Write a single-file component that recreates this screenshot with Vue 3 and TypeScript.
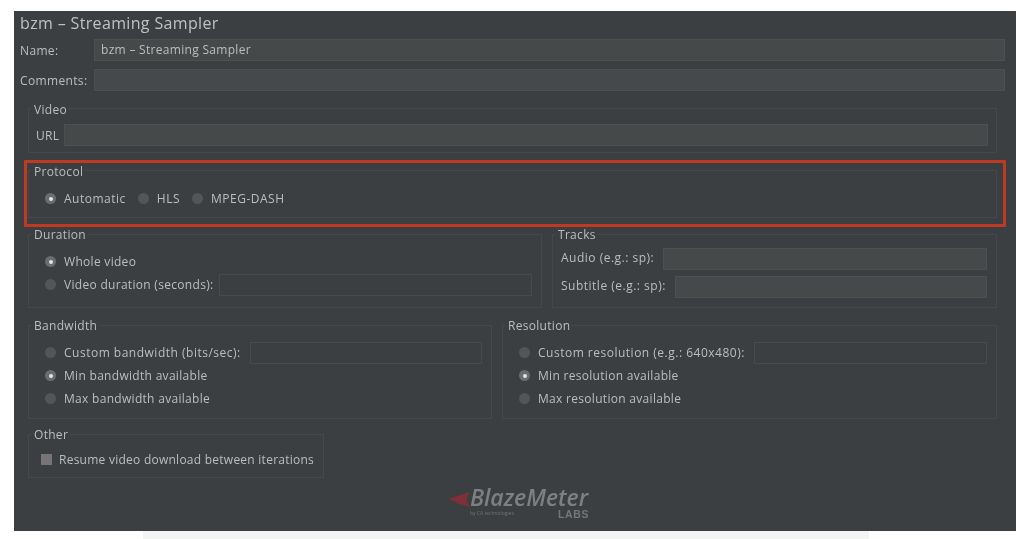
<script setup lang="ts">
interface Opt { label: string; on?: boolean; input?: boolean; wide?: boolean }
const protocol: Opt[] = [{ label: 'Automatic', on: true }, { label: 'HLS' }, { label: 'MPEG-DASH' }]
const duration: Opt[] = [{ label: 'Whole video', on: true }, { label: 'Video duration (seconds):', input: true }]
const bandwidth: Opt[] = [
  { label: 'Custom bandwidth (bits/sec):', input: true, wide: true },
  { label: 'Min bandwidth available', on: true },
  { label: 'Max bandwidth available' },
]
const resolution: Opt[] = [
  { label: 'Custom resolution (e.g.: 640x480):', input: true, wide: true },
  { label: 'Min resolution available', on: true },
  { label: 'Max resolution available' },
]
</script>

<template>
  <div class="page">
    <main class="panel">
      <h1 class="title">bzm – Streaming Sampler</h1>

      <div class="form-row name">
        <label class="lbl">Name:</label>
        <div class="input val">bzm – Streaming Sampler</div>
      </div>
      <div class="form-row comments">
        <label class="lbl">Comments:</label>
        <div class="input"></div>
      </div>

      <fieldset class="group video">
        <legend>Video</legend>
        <div class="url">
          <span class="txt">URL</span>
          <div class="input"></div>
        </div>
      </fieldset>

      <fieldset class="group protocol">
        <legend>Protocol</legend>
        <div class="inline">
          <div v-for="o in protocol" :key="o.label" class="opt">
            <span class="radio" :class="{ on: o.on }"></span>
            <span class="txt wide">{{ o.label }}</span>
          </div>
        </div>
        <div class="highlight"></div>
      </fieldset>

      <div class="split dur-tracks">
        <fieldset class="group">
          <legend>Duration</legend>
          <div class="stack">
            <div v-for="o in duration" :key="o.label" class="opt">
              <span class="radio" :class="{ on: o.on }"></span>
              <span class="txt">{{ o.label }}</span>
              <div v-if="o.input" class="input line"></div>
            </div>
          </div>
        </fieldset>
        <fieldset class="group">
          <legend>Tracks</legend>
          <div class="tracks">
            <div class="track">
              <span class="txt wide">Audio (e.g.: sp):</span>
              <div class="input"></div>
            </div>
            <div class="track">
              <span class="txt wide">Subtitle (e.g.: sp):</span>
              <div class="input"></div>
            </div>
          </div>
        </fieldset>
      </div>

      <div class="split band-res">
        <fieldset class="group">
          <legend>Bandwidth</legend>
          <div class="stack">
            <div v-for="o in bandwidth" :key="o.label" class="opt">
              <span class="radio" :class="{ on: o.on }"></span>
              <span class="txt" :class="{ wide: o.wide }">{{ o.label }}</span>
              <div v-if="o.input" class="input line far"></div>
            </div>
          </div>
        </fieldset>
        <fieldset class="group">
          <legend>Resolution</legend>
          <div class="stack">
            <div v-for="o in resolution" :key="o.label" class="opt">
              <span class="radio" :class="{ on: o.on }"></span>
              <span class="txt" :class="{ wide: o.wide }">{{ o.label }}</span>
              <div v-if="o.input" class="input line far"></div>
            </div>
          </div>
        </fieldset>
      </div>

      <fieldset class="group other">
        <legend>Other</legend>
        <div class="check-row">
          <span class="check"></span>
          <span class="txt">Resume video download between iterations</span>
        </div>
      </fieldset>

      <div class="logo">
        <svg class="mark" width="23" height="18" viewBox="0 0 22 18">
          <path d="M0 8 L21 1 L18 9 L21 16 L11 13 Z" fill="#7f2f38" />
        </svg>
        <div class="logo-text">
          <div class="brand">BlazeMeter</div>
          <div class="sub">
            <span class="by">by CA technologies</span>
            <span class="labs">LABS</span>
          </div>
        </div>
      </div>
    </main>
    <div class="strip"></div>
  </div>
</template>

<style>
html, body { margin: 0; background: #fff; }
</style>

<style scoped>
.page {
  width: 1024px;
  height: 539px;
  overflow: hidden;
  padding-top: 11px;
  box-sizing: border-box;
  font-family: "Open Sans", "DejaVu Sans", sans-serif;
}
.panel {
  width: 1002px;
  height: 520px;
  margin-left: 14px;
  box-sizing: border-box;
  background: #3c3f41;
  color: #bcbebe;
  padding: 0 11px 0 14px;
  display: flex;
  flex-direction: column;
  filter: blur(0.6px);
}
.title {
  margin: 0 0 0 -8px;
  height: 28px;
  line-height: 24px;
  font-size: 16px;
  font-weight: 400;
  letter-spacing: 0.35px;
  color: #c0c2c2;
}
.form-row {
  display: flex;
  align-items: center;
  height: 22px;
  margin-left: -8px;
}
.form-row .input { flex: 1; height: 22px; }
.comments { margin-top: 8px; }
.lbl {
  width: 74px;
  flex: none;
  font-size: 12px;
  letter-spacing: 0.35px;
}
.input {
  box-sizing: border-box;
  background: #45494a;
  border: 1px solid #4c5052;
  min-width: 0;
}
.val {
  font-size: 12px;
  letter-spacing: 0.3px;
  line-height: 20px;
  padding-left: 6px;
}
.txt {
  font-size: 12px;
  letter-spacing: 0.3px;
  white-space: nowrap;
}
.txt.wide { letter-spacing: 0.5px; }
.group {
  margin: 0;
  padding: 0;
  min-width: 0;
  box-sizing: border-box;
  border: 1px solid #46494b;
}
.group legend {
  margin-left: 2px;
  padding: 0 2px 0 3px;
  font-size: 12px;
  letter-spacing: 0.3px;
  line-height: 18px;
  height: 14px;
}
.split .group legend,
.other legend { line-height: 16px; }
.video { margin: 10px 8px 0 0; height: 52px; }
.url {
  display: flex;
  align-items: center;
  gap: 5px;
  padding: 9px 8px 0 7px;
}
.url .input { flex: 1; height: 22px; }
.protocol {
  position: relative;
  margin: 10px 8px 0 0;
  height: 55px;
}
.highlight {
  position: absolute;
  left: -5px;
  right: -10px;
  top: -17px;
  bottom: -17px;
  border: 3px solid #bf3a22;
  border-radius: 1px;
  pointer-events: none;
}
.inline {
  display: flex;
  gap: 12px;
  padding: 10px 0 0 16px;
}
.opt {
  display: flex;
  align-items: center;
  height: 23px;
}
.radio {
  flex: none;
  width: 11px;
  height: 11px;
  border-radius: 50%;
  background: #535657;
  margin-right: 8px;
  position: relative;
}
.radio.on { background: #6a6c6d; }
.radio.on::after {
  content: "";
  position: absolute;
  left: 3.5px;
  top: 3.5px;
  width: 4px;
  height: 4px;
  border-radius: 50%;
  background: #e4e4e4;
}
.split {
  display: grid;
  column-gap: 10px;
  margin-right: 8px;
}
.dur-tracks {
  grid-template-columns: 514px 445px;
  margin-top: 9px;
  height: 81px;
}
.band-res {
  grid-template-columns: 464px 495px;
  margin-top: 10px;
  height: 101px;
}
.stack {
  display: flex;
  flex-direction: column;
  padding: 9px 9px 0 16px;
}
.opt .input.line {
  flex: 1;
  height: 22px;
  margin-left: 6px;
  background: transparent;
  border-color: #484b4d;
}
.opt .input.line.far { margin-left: 9px; }
.tracks {
  display: flex;
  flex-direction: column;
  gap: 6px;
  padding: 7px 9px 0 8px;
}
.track {
  display: flex;
  align-items: center;
  gap: 9px;
}
.track .txt { margin-bottom: 3px; }
.track .input { flex: 1; height: 22px; }
.other {
  width: 296px;
  margin-top: 8px;
  height: 51px;
}
.check-row {
  display: flex;
  align-items: center;
  gap: 7px;
  padding: 10px 0 0 12px;
}
.check-row .txt { letter-spacing: 0.25px; }
.check {
  width: 11px;
  height: 11px;
  background: #767475;
}
.logo {
  display: flex;
  align-items: flex-start;
  justify-content: center;
  margin-top: 8px;
  margin-left: 7px;
}
.mark { margin: 5px -1px 0 0; }
.logo-text { width: 122px; }
.brand {
  font-style: italic;
  font-weight: 600;
  font-size: 23px;
  line-height: 23px;
  height: 23px;
  letter-spacing: 0;
  color: #7d8082;
}
.sub {
  display: flex;
  justify-content: space-between;
  align-items: flex-start;
  padding-right: 3px;
}
.by {
  font-size: 5px;
  line-height: 8px;
  color: #707375;
  white-space: nowrap;
}
.labs {
  font-family: "Liberation Sans", sans-serif;
  font-weight: 700;
  font-size: 10.5px;
  line-height: 11px;
  letter-spacing: 0.6px;
  color: #74777a;
}
.strip {
  width: 726px;
  height: 8px;
  margin-left: 143px;
  background: #f3f5f4;
}
</style>
